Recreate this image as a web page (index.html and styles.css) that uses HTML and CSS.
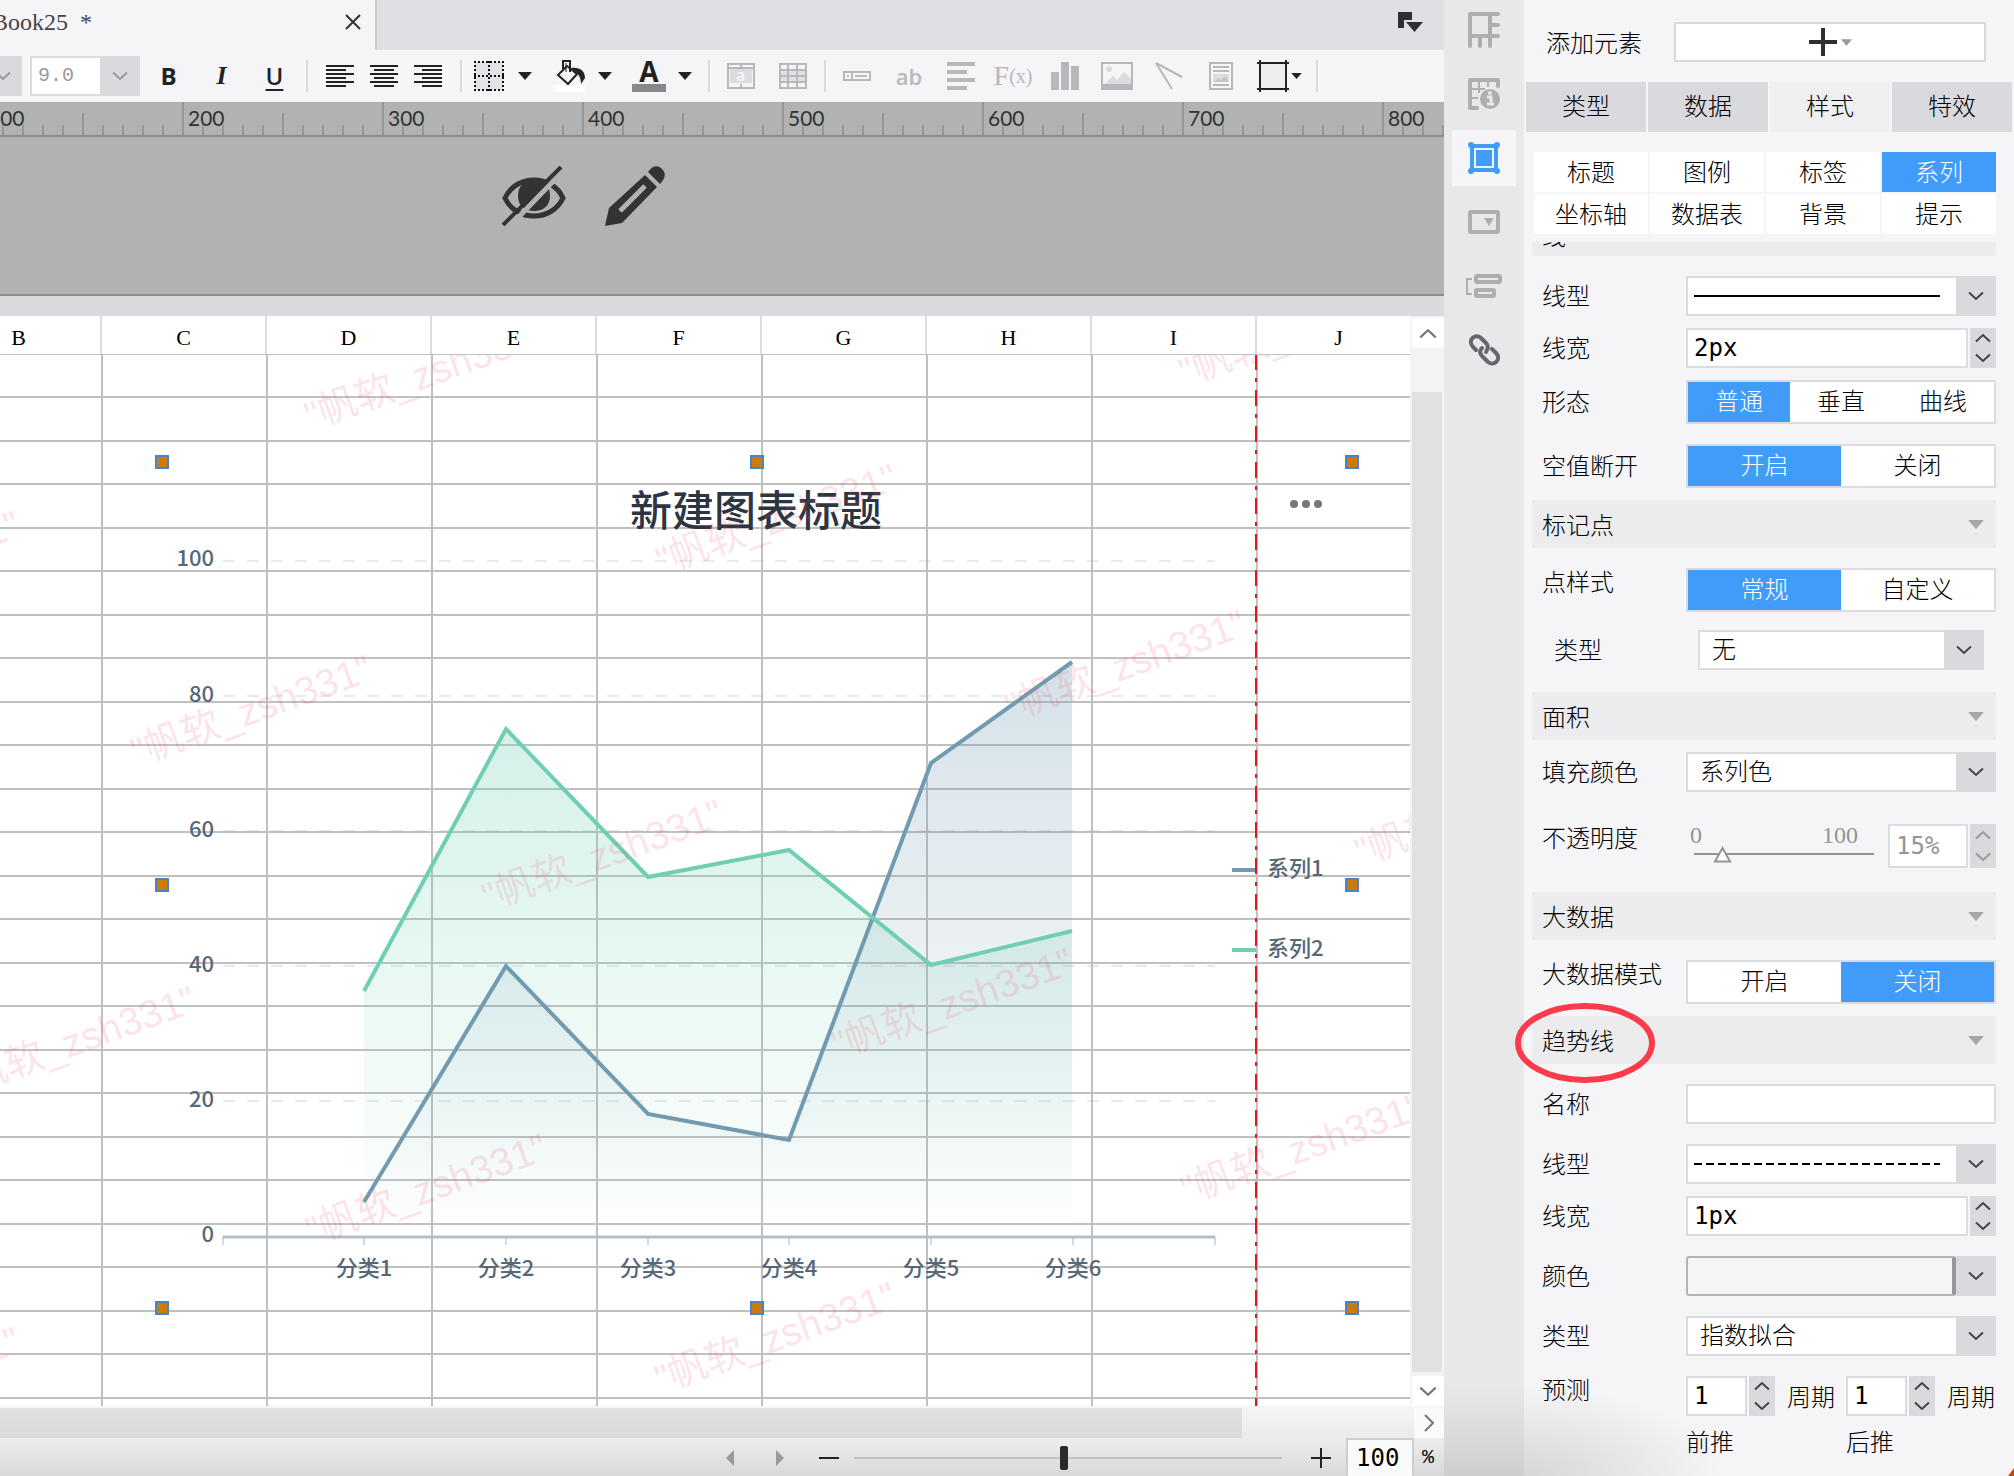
FILE: index.html
```html
<!DOCTYPE html>
<html lang="zh-CN">
<head>
    <meta charset="UTF-8">
    <meta name="viewport" content="width=device-width, initial-scale=1.0">
    <title>Book25</title>
    <link rel="stylesheet" href="styles.css">
</head>
<body>
    <svg class="defs" aria-hidden="true">
        <symbol id="down" viewBox="0 0 16 10"><path d="M1 1.500L8 8L15 1.500" fill="none" stroke="currentColor" stroke-width="2"/></symbol>
        <symbol id="up" viewBox="0 0 16 10"><path d="M1 8.500L8 2L15 8.500" fill="none" stroke="currentColor" stroke-width="2"/></symbol>
        <symbol id="caret" viewBox="0 0 14 8"><path d="M0 0H14L7 8Z" fill="currentColor"/></symbol>
    </svg>
    <div class="app">
        <main class="editor">
            <header class="tabs">
                <div class="file-tab">
                    <span>Book25&nbsp; *</span>
                    <button class="close" aria-label="关闭"><svg width="16" height="16" viewBox="0 0 16 16"><path d="M1 1L15 15M15 1L1 15" stroke="#333" stroke-width="2"/></svg></button>
                </div>
                <button class="tab-list" aria-label="列表"><svg width="26" height="20" viewBox="0 0 26 20"><path d="M1 0H15V8H7V16H1Z" fill="#2f2f33"/><path d="M9 10H26L17.500 20Z" fill="#2f2f33"/></svg></button>
            </header>

            <div class="toolbar">
                <div class="stub"><svg width="16" height="10"><use href="#down"/></svg></div>
                <div class="select size">
                    <select aria-label="字号" disabled><option>9.0</option></select>
                    <span class="arrow"><svg width="16" height="10"><use href="#down"/></svg></span>
                </div>
                <div class="group fonts">
                    <button class="bold">B</button>
                    <button class="italic">I</button>
                    <button class="under">U</button>
                </div>
                <i class="sep"></i>
                <div class="group aligns">
                    <button aria-label="左对齐"><svg width="28" height="24" viewBox="0 0 28 24"><path d="M0 2H28M0 6H20M0 10H28M0 14H20M0 18H28M0 22H20" stroke="#222" stroke-width="2"/></svg></button>
                    <button aria-label="居中"><svg width="28" height="24" viewBox="0 0 28 24"><path d="M0 2H28M4 6H24M0 10H28M4 14H24M0 18H28M4 22H24" stroke="#222" stroke-width="2"/></svg></button>
                    <button aria-label="右对齐"><svg width="28" height="24" viewBox="0 0 28 24"><path d="M0 2H28M8 6H28M0 10H28M8 14H28M0 18H28M8 22H28" stroke="#222" stroke-width="2"/></svg></button>
                </div>
                <i class="sep"></i>
                <div class="group drops">
                    <button aria-label="边框">
                        <svg width="34" height="32" viewBox="0 0 34 32"><rect x="3" y="2" width="28" height="28" fill="#e3e3e7"/><path d="M2 2H32M2 16H32M2 30H32M3 1V31M17 1V31M31 1V31" stroke="#111" stroke-width="2" stroke-dasharray="2 2"/></svg>
                        <svg width="14" height="8"><use href="#caret"/></svg>
                    </button>
                    <button aria-label="填充">
                        <svg width="34" height="32" viewBox="0 0 34 32"><path d="M1 25H33V32H1Z" fill="#fff"/><path d="M11 9V1H18V12M6 15L15 6L25 14L16 24Z" fill="#f5f5f8" stroke="#222" stroke-width="2"/><path d="M19 8C28 7 33 11 33 18L29 24C29 18 27 14 22 11Z" fill="#222"/><path d="M14 3V12" stroke="#222" stroke-width="1"/></svg>
                        <svg width="14" height="8"><use href="#caret"/></svg>
                    </button>
                    <button aria-label="字体颜色">
                        <span class="letter">A</span>
                        <svg width="14" height="8"><use href="#caret"/></svg>
                    </button>
                </div>
                <i class="sep"></i>
                <div class="group insert">
                    <button aria-label="合并"><svg width="28" height="26" viewBox="0 0 28 26"><path d="M1 1H27V25H1ZM1 5H27M14 1V5M14 21V25" fill="none" stroke="#b8b8bc" stroke-width="2"/><path d="M3 6H25V20H3Z" fill="#dcdce0"/><text x="14" y="18" class="ico-a">a</text></svg></button>
                    <button aria-label="拆分"><svg width="28" height="26" viewBox="0 0 28 26"><path d="M2 7H26V19H2Z" fill="#e0e0e4"/><path d="M1 1H27V25H1ZM1 7H27M1 13H27M1 19H27M9 1V25M18 1V25" fill="none" stroke="#b8b8bc" stroke-width="2"/></svg></button>
                </div>
                <i class="sep"></i>
                <div class="group insert">
                    <button aria-label="控件"><svg width="28" height="10" viewBox="0 0 28 10"><path d="M1 1H27V9H1ZM9 1V9M12 5H24M4 5H6" fill="none" stroke="#b8b8bc" stroke-width="2"/></svg></button>
                    <button class="ab">ab</button>
                    <button aria-label="段落"><svg width="28" height="28" viewBox="0 0 28 28"><path d="M0 2H28M0 10H20M0 18H28M0 26H20" stroke="#b8b8bc" stroke-width="4"/></svg></button>
                    <button class="fx">F<small>(x)</small></button>
                    <button aria-label="图表"><svg width="28" height="28" viewBox="0 0 28 28"><path d="M0 10H8V28H0ZM10 0H18V28H10ZM20 4H28V28H20Z" fill="#b8b8bc"/></svg></button>
                    <button aria-label="图片"><svg width="32" height="28" viewBox="0 0 32 28"><path d="M1 1H31V27H1Z" fill="none" stroke="#b8b8bc" stroke-width="2"/><path d="M1 22H31V27H1Z" fill="#b8b8bc"/><path d="M4 22L12 14L16 18L23 10L30 17V22Z" fill="#dcdce0"/><circle cx="8" cy="7" r="3" fill="#dcdce0"/></svg></button>
                    <button aria-label="斜线"><svg width="28" height="28" viewBox="0 0 28 28"><path d="M1 1L27 15M1 1L17 27" stroke="#b8b8bc" stroke-width="2"/></svg></button>
                    <button aria-label="文档"><svg width="24" height="28" viewBox="0 0 24 28"><path d="M1 1H23V27H1Z" fill="none" stroke="#b8b8bc" stroke-width="2"/><path d="M4 5H20M4 9H20M4 23H20" stroke="#b8b8bc" stroke-width="2"/><path d="M4 12H20V20H4Z" fill="#dcdce0"/><path d="M5 20L9 16L12 18L16 14L19 18V20Z" fill="#c4c4c8"/></svg></button>
                    <button class="frame" aria-label="悬浮">
                        <svg width="32" height="32" viewBox="0 0 32 32"><path d="M3 3H29V29H3Z" fill="#ededf0"/><path d="M0 3H32M0 29H32M3 0V32M29 0V32" stroke="#222" stroke-width="2"/></svg>
                        <svg width="11" height="6"><use href="#caret"/></svg>
                    </button>
                </div>
                <i class="sep"></i>
            </div>

            <div class="ruler">
                <span>100</span><span>200</span><span>300</span><span>400</span><span>500</span><span>600</span><span>700</span><span>800</span>
            </div>

            <div class="desk">
                <button aria-label="隐藏"><svg width="64" height="60" viewBox="0 0 64 60">
                    <path d="M3 32C14 8 50 8 61 32C50 56 14 56 3 32Z" fill="none" stroke="#333335" stroke-width="5"/>
                    <path d="M16 30C16 18 24 14 32 14C40 14 48 18 48 30C48 40 41 45 32 45C23 45 16 40 16 30Z" fill="#333335"/>
                    <path d="M62 4L8 60" stroke="#b2b2b2" stroke-width="5"/>
                    <path d="M59 1L1 59" stroke="#333335" stroke-width="4"/></svg></button>
                <button aria-label="编辑"><svg width="62" height="60" viewBox="0 0 62 60">
                    <path d="M41 9L53 21L18 57L1 60L5 42Z" fill="#333335"/>
                    <path d="M41 20L16 45" stroke="#b2b2b2" stroke-width="5"/>
                    <path d="M44 6C49 -1 54 -1 58 3C62 7 62 12 56 18Z" fill="#333335"/></svg></button>
            </div>

            <div class="sheet-wrap">
                <div class="sheet">
                    <div class="cols"><span>B</span><span>C</span><span>D</span><span>E</span><span>F</span><span>G</span><span>H</span><span>I</span><span>J</span></div>
                    <div class="cells">
                        <svg class="chart" width="1410" height="1052" viewBox="0 354 1410 1052">
                            <defs>
                                <linearGradient id="gGreen" x1="0" y1="0" x2="0" y2="1"><stop offset="0" stop-color="#6fcfb2" stop-opacity=".3"/><stop offset="1" stop-color="#6fcfb2" stop-opacity="0"/></linearGradient>
                                <linearGradient id="gBlue" x1="0" y1="0" x2="0" y2="1"><stop offset="0" stop-color="#729bb5" stop-opacity=".3"/><stop offset="1" stop-color="#729bb5" stop-opacity="0"/></linearGradient>
                            </defs>
                            <path class="grid" d="M223 561H1215M223 696H1215M223 831H1215M223 966H1215M223 1101H1215"/>
                            <path d="M364 991L506 729L648 877L789 850L931 965L1072 931V1230H364Z" fill="url(#gGreen)"/>
                            <path d="M364 1202L506 966L648 1114L789 1140L931 763L1072 662V1230H364Z" fill="url(#gBlue)"/>
                            <path class="line blue" d="M364 1202L506 966L648 1114L789 1140L931 763L1072 662"/>
                            <path class="line green" d="M364 991L506 729L648 877L789 850L931 965L1072 931"/>
                            <path class="axis" d="M223 1237H1215"/>
                            <path class="tick" d="M223 1237V1245M364 1237V1245M506 1237V1245M648 1237V1245M789 1237V1245M931 1237V1245M1073 1237V1245M1215 1237V1245"/>
                            <g class="label end">
                                <text x="214" y="566">100</text><text x="214" y="702">80</text><text x="214" y="837">60</text><text x="214" y="972">40</text><text x="214" y="1107">20</text><text x="214" y="1242">0</text>
                            </g>
                            <g class="label mid">
                                <text x="364" y="1276">分类1</text><text x="506" y="1276">分类2</text><text x="648" y="1276">分类3</text><text x="789" y="1276">分类4</text><text x="931" y="1276">分类5</text><text x="1073" y="1276">分类6</text>
                            </g>
                            <path class="line blue" d="M1232 870H1256"/><path class="line green" d="M1232 950H1256"/>
                            <g class="label"><text x="1267" y="876">系列1</text><text x="1267" y="956">系列2</text></g>
                            <text class="title" x="756" y="526">新建图表标题</text>
                            <g fill="#777"><circle cx="1294" cy="504" r="4"/><circle cx="1306" cy="504" r="4"/><circle cx="1318" cy="504" r="4"/></g>
                            <path class="page-edge" d="M1256 354V1406"/>
                            <g class="mark" transform="translate(6 6)">
                                <text transform="translate(305 424) rotate(-20)">"帆软_zsh331"</text>
                                <text transform="translate(656 569) rotate(-20)">"帆软_zsh331"</text>
                                <text transform="translate(1005 715) rotate(-20)">"帆软_zsh331"</text>
                                <text transform="translate(1355 860) rotate(-20)">"帆软_zsh331"</text>
                                <text transform="translate(131 760) rotate(-20)">"帆软_zsh331"</text>
                                <text transform="translate(482 905) rotate(-20)">"帆软_zsh331"</text>
                                <text transform="translate(832 1053) rotate(-20)">"帆软_zsh331"</text>
                                <text transform="translate(1181 1198) rotate(-20)">"帆软_zsh331"</text>
                                <text transform="translate(-45 1091) rotate(-20)">"帆软_zsh331"</text>
                                <text transform="translate(306 1239) rotate(-20)">"帆软_zsh331"</text>
                                <text transform="translate(655 1387) rotate(-20)">"帆软_zsh331"</text>
                                <text transform="translate(-221 1432) rotate(-20)">"帆软_zsh331"</text>
                                <text transform="translate(-221 616) rotate(-20)">"帆软_zsh331"</text>
                                <text transform="translate(1179 380) rotate(-20)">"帆软_zsh331"</text>
                            </g>
                            <g class="handles">
                                <rect x="156" y="456" width="12" height="12"/><rect x="751" y="456" width="12" height="12"/><rect x="1346" y="456" width="12" height="12"/>
                                <rect x="156" y="879" width="12" height="12"/><rect x="1346" y="879" width="12" height="12"/>
                                <rect x="156" y="1302" width="12" height="12"/><rect x="751" y="1302" width="12" height="12"/><rect x="1346" y="1302" width="12" height="12"/>
                            </g>
                        </svg>
                    </div>
                </div>
                <div class="vscroll">
                    <button aria-label="向上"><svg width="18" height="11"><use href="#up"/></svg></button>
                    <div class="thumb"></div>
                    <button aria-label="向下"><svg width="18" height="11"><use href="#down"/></svg></button>
                </div>
            </div>

            <div class="hscroll">
                <div class="thumb"></div>
                <button aria-label="向右"><svg width="10" height="18" viewBox="0 0 10 18"><path d="M1 1L9 9L1 17" fill="none" stroke="#777" stroke-width="2"/></svg></button>
            </div>
            <footer class="status">
                <button aria-label="上一页"><svg width="8" height="16" viewBox="0 0 8 16"><path d="M8 0V16L0 8Z" fill="#999"/></svg></button>
                <button aria-label="下一页"><svg width="8" height="16" viewBox="0 0 8 16"><path d="M0 0V16L8 8Z" fill="#999"/></svg></button>
                <button class="minus" aria-label="缩小"><svg width="22" height="22" viewBox="0 0 22 22"><path d="M1 11H21" stroke="#222" stroke-width="2"/></svg></button>
                <input class="zoom" type="range" min="0" max="100" value="49" aria-label="缩放">
                <button class="plus" aria-label="放大"><svg width="22" height="22" viewBox="0 0 22 22"><path d="M1 11H21M11 1V21" stroke="#222" stroke-width="2"/></svg></button>
                <input class="percent" id="percent" type="text" value="100">
                <label for="percent">%</label>
            </footer>
        </main>

        <nav class="rail">
            <button aria-label="单元格元素"><svg width="32" height="36" viewBox="0 0 32 36"><path d="M30 2H2V34M2 24H30M22 2V24M22 13H30M12 24V34M22 24V34" fill="none" stroke="#aeaeb0" stroke-width="4" stroke-linecap="round" stroke-linejoin="round"/></svg></button>
            <button aria-label="单元格属性"><svg width="32" height="32" viewBox="0 0 32 32"><path d="M30 8V2H2V30H9" fill="none" stroke="#aeaeb0" stroke-width="4" stroke-linecap="round" stroke-linejoin="round"/><path d="M11 3V15M20 3V9M4 11H17M4 20H10" stroke="#aeaeb0" stroke-width="2"/><circle cx="22" cy="21" r="10" fill="#aeaeb0"/><circle cx="22" cy="15" r="2" fill="#e8e8ea"/><path d="M19 19H23V26M19 26H26" fill="none" stroke="#e8e8ea" stroke-width="3"/></svg></button>
            <button class="on" aria-label="悬浮元素"><svg width="32" height="32" viewBox="0 0 32 32"><path d="M4 4H28V28H4Z" fill="none" stroke="#419bf9" stroke-width="4"/><path d="M8 8H24V24H8Z" fill="#419bf9"/><g fill="#419bf9"><circle cx="3" cy="3" r="3"/><circle cx="29" cy="3" r="3"/><circle cx="3" cy="29" r="3"/><circle cx="29" cy="29" r="3"/></g></svg></button>
            <button aria-label="控件设置"><svg width="32" height="24" viewBox="0 0 32 24"><rect x="2" y="2" width="28" height="20" rx="1" fill="none" stroke="#aeaeb0" stroke-width="4"/><path d="M16 8H26L21 16Z" fill="#aeaeb0"/></svg></button>
            <button aria-label="条件属性"><svg width="36" height="24" viewBox="0 0 36 24"><path d="M6 5H1V20H6" fill="none" stroke="#aeaeb0" stroke-width="2"/><rect x="10" y="2" width="24" height="6" rx="1" fill="none" stroke="#aeaeb0" stroke-width="4"/><rect x="10" y="16" width="18" height="6" rx="1" fill="none" stroke="#aeaeb0" stroke-width="4"/></svg></button>
            <button aria-label="超级链接"><svg width="32" height="32" viewBox="0 0 32 32"><g fill="none" stroke="#66676c" stroke-width="4" stroke-linecap="round"><path d="M8 16L5 13C-1 6 7 -1 13 4L18 9C21 12 20 15 18 18"/><path d="M14 14C11 17 12 20 14 22L20 28C26 33 34 25 28 19L24 15"/></g></svg></button>
        </nav>

        <aside class="panel">
            <div class="add-row">
                <span>添加元素</span>
                <button aria-label="添加"><svg width="28" height="28" viewBox="0 0 28 28"><path d="M0 14H28M14 0V28" stroke="#2f2f33" stroke-width="4"/></svg><svg class="mini" width="11" height="7"><use href="#caret"/></svg></button>
            </div>
            <div class="main-tabs">
                <button>类型</button><button>数据</button><button class="on">样式</button><button>特效</button>
            </div>
            <div class="sub-tabs">
                <button>标题</button><button>图例</button><button>标签</button><button class="on">系列</button>
                <button>坐标轴</button><button>数据表</button><button>背景</button><button>提示</button>
            </div>
            <div class="scroll">
                <h3 class="cut"><span>线</span></h3>
                <div class="row first">
                    <label for="lineType">线型</label>
                    <div class="select"><select id="lineType"><option></option></select><i class="stroke"></i><span class="arrow"><svg width="16" height="10"><use href="#down"/></svg></span></div>
                </div>
                <div class="row">
                    <label for="lineWidth">线宽</label>
                    <div class="spin"><input id="lineWidth" type="text" value="2px"><div class="steps"><button aria-label="增加"><svg width="16" height="10"><use href="#up"/></svg></button><button aria-label="减少"><svg width="16" height="10"><use href="#down"/></svg></button></div></div>
                </div>
                <div class="row">
                    <span class="name">形态</span>
                    <div class="seg"><button class="on">普通</button><button>垂直</button><button>曲线</button></div>
                </div>
                <div class="row wide">
                    <span class="name">空值断开</span>
                    <div class="seg"><button class="on">开启</button><button>关闭</button></div>
                </div>

                <h3><span>标记点</span><svg width="16" height="9"><use href="#caret"/></svg></h3>
                <div class="row top wide">
                    <span class="name">点样式</span>
                    <div class="seg"><button class="on">常规</button><button>自定义</button></div>
                </div>
                <div class="row inset">
                    <label for="pointType">类型</label>
                    <div class="select"><select id="pointType"><option>无</option></select><span class="arrow"><svg width="16" height="10"><use href="#down"/></svg></span></div>
                </div>

                <h3 class="far"><span>面积</span><svg width="16" height="9"><use href="#caret"/></svg></h3>
                <div class="row">
                    <label for="fill">填充颜色</label>
                    <div class="select"><select id="fill"><option>系列色</option></select><span class="arrow"><svg width="16" height="10"><use href="#down"/></svg></span></div>
                </div>
                <div class="row top alpha">
                    <label for="alpha">不透明度</label>
                    <div class="slider">
                        <div class="scale"><span>0</span><span>100</span></div>
                        <input id="alpha" type="range" min="0" max="100" value="15" disabled>
                    </div>
                    <div class="spin off"><input type="text" value="15%" aria-label="不透明度" disabled><div class="steps"><button aria-label="增加" disabled><svg width="16" height="10"><use href="#up"/></svg></button><button aria-label="减少" disabled><svg width="16" height="10"><use href="#down"/></svg></button></div></div>
                </div>

                <h3 class="far"><span>大数据</span><svg width="16" height="9"><use href="#caret"/></svg></h3>
                <div class="row top wide">
                    <span class="name">大数据模式</span>
                    <div class="seg"><button>开启</button><button class="on">关闭</button></div>
                </div>

                <h3 class="trend"><span>趋势线</span><svg width="16" height="9"><use href="#caret"/></svg>
                    <svg class="ring" width="142" height="82" viewBox="0 0 142 82"><ellipse cx="71" cy="41" rx="67" ry="37" fill="none" stroke="#fa3b4b" stroke-width="6"/></svg>
                </h3>
                <div class="row wide">
                    <label for="trendName">名称</label>
                    <input id="trendName" class="text" type="text">
                </div>
                <div class="row wide">
                    <label for="trendLine">线型</label>
                    <div class="select"><select id="trendLine"><option></option></select><i class="stroke dashed"></i><span class="arrow"><svg width="16" height="10"><use href="#down"/></svg></span></div>
                </div>
                <div class="row">
                    <label for="trendWidth">线宽</label>
                    <div class="spin"><input id="trendWidth" type="text" value="1px"><div class="steps"><button aria-label="增加"><svg width="16" height="10"><use href="#up"/></svg></button><button aria-label="减少"><svg width="16" height="10"><use href="#down"/></svg></button></div></div>
                </div>
                <div class="row wide">
                    <label for="color">颜色</label>
                    <button id="color" class="select color"><i class="swatch"></i><span class="arrow"><svg width="16" height="10"><use href="#down"/></svg></span></button>
                </div>
                <div class="row wide">
                    <label for="trendType">类型</label>
                    <div class="select"><select id="trendType"><option>指数拟合</option></select><span class="arrow"><svg width="16" height="10"><use href="#down"/></svg></span></div>
                </div>
                <div class="row top wide">
                    <span class="name">预测</span>
                    <div class="forecast">
                        <div>
                            <div class="period"><div class="spin"><input id="forward" type="text" value="1"><div class="steps"><button aria-label="增加"><svg width="16" height="10"><use href="#up"/></svg></button><button aria-label="减少"><svg width="16" height="10"><use href="#down"/></svg></button></div></div><span>周期</span></div>
                            <label for="forward">前推</label>
                        </div>
                        <div>
                            <div class="period"><div class="spin"><input id="back" type="text" value="1"><div class="steps"><button aria-label="增加"><svg width="16" height="10"><use href="#up"/></svg></button><button aria-label="减少"><svg width="16" height="10"><use href="#down"/></svg></button></div></div><span>周期</span></div>
                            <label for="back">后推</label>
                        </div>
                    </div>
                </div>
            </div>
            <i class="corner"></i>
        </aside>
    </div>
</body>
</html>
```
FILE: styles.css
```css
* { box-sizing: border-box; }
body { margin: 0; overflow: hidden; background: #f5f5f8; color: #000; font-family: "Noto Sans CJK SC", sans-serif; font-size: 24px; font-weight: 300; line-height: 26px; }
button { display: flex; align-items: center; justify-content: center; padding: 0; border: 0; background: none; color: inherit; font: inherit; cursor: pointer; }
input, select { font: inherit; color: inherit; border-radius: 0; outline: none; }
svg { display: block; flex: none; }
.defs { position: absolute; width: 0; height: 0; }

.app { display: flex; height: 100vh; overflow: hidden; }
.editor { flex: 1; min-width: 0; display: flex; flex-direction: column; overflow: hidden; }

/* file tabs */
.tabs { display: flex; justify-content: space-between; height: 50px; flex: none; background: #e0dfe4; }
.file-tab { display: flex; justify-content: space-between; width: 377px; padding: 6px 14px 0 0; background: #f5f5f8; border-right: 2px solid #cbcbd0; color: #444; font-family: "Liberation Serif", serif; font-size: 24px; line-height: 32px; white-space: nowrap; }
.file-tab span { margin-left: -8px; }
.file-tab .close { height: 32px; }
.tab-list { padding-right: 21px; height: 44px; }

/* toolbar */
.toolbar { display: flex; align-items: center; height: 52px; flex: none; background: #f5f5f8; color: #222; }
.stub { display: flex; align-items: center; justify-content: flex-end; width: 22px; height: 40px; padding-right: 11px; margin-right: 8px; background: #dadade; color: #999; }
.select { position: relative; display: flex; flex: 1; height: 40px; min-width: 0; background: #fff; border: 2px solid #dcdce0; border-right: 0; }
.select select { flex: 1; min-width: 0; appearance: none; border: 0; background: none; padding: 0 0 4px 12px; opacity: 1; }
.select .arrow { display: flex; align-items: center; justify-content: center; width: 40px; margin: -2px 0; background: #dadade; color: #444; pointer-events: none; }
.size { flex: none; width: 110px; margin-right: 2px; }
.size select { padding: 0 0 0 6px; color: #999; font-family: "Liberation Mono", monospace; font-size: 20px; }
.size .arrow { color: #999; }
.group { display: flex; align-items: center; height: 40px; }
.fonts button { width: 53px; font-family: "Open Sans", sans-serif; font-size: 24px; font-weight: 700; }
.fonts .italic { font-family: "Liberation Serif", serif; font-style: italic; font-size: 26px; }
.fonts .under { font-weight: 600; text-decoration: underline; text-decoration-thickness: 2px; text-underline-offset: 4px; }
.sep { width: 2px; height: 32px; margin: 0 5px; background: #dcdce0; }
.aligns { padding: 0 5px; }
.aligns button { width: 44px; }
.drops { gap: 20px; padding: 0 11px 0 5px; }
.drops button { gap: 12px; }
.letter { width: 34px; height: 32px; border-bottom: 8px solid #888; font-family: "Open Sans", sans-serif; font-size: 28px; font-weight: 700; line-height: 22px; }
.insert button { width: 52px; }
.insert .frame { width: 64px; gap: 2px; }
.ico-a { fill: #f5f5f8; font-family: "Open Sans", sans-serif; font-size: 16px; font-weight: 600; text-anchor: middle; }
.ab, .fx { color: #b8b8bc; }
.insert .ab { font-family: "Open Sans", sans-serif; font-size: 22px; font-weight: 600; }
.insert .fx { font-family: "Liberation Serif", serif; font-size: 28px; font-weight: 400; }
.fx small { font-size: 20px; }

/* ruler: 200px major, 100px half, 20px minor */
.ruler { display: flex; height: 35px; flex: none; overflow: hidden; border-bottom: 2px solid #8c8c8c; background-color: #b2b2b2; color: #333; font-family: Lato, sans-serif; font-size: 21px; font-weight: 400; line-height: 32px;
    background-image: linear-gradient(90deg, #969698 2px, transparent 2px), linear-gradient(90deg, #969698 2px, transparent 2px), linear-gradient(90deg, #969698 2px, transparent 2px);
    background-size: 200px 34px, 200px 22px, 20px 10px; background-position: 182px 0, 82px 11px, 2px 23px; background-repeat: repeat-x; }
.ruler span { flex: none; width: 200px; padding-left: 6px; }
.ruler span:first-child { margin-left: -18px; }

.desk { display: flex; gap: 38px; height: 159px; flex: none; padding: 29px 0 0 502px; align-items: flex-start; background: #b2b2b2; border-bottom: 2px solid #8c8c8c; }

/* sheet */
.sheet-wrap { display: flex; flex: 1; min-height: 0; border-top: 20px solid #dad9de; }
.sheet { flex: 1; min-width: 0; overflow: hidden; background: #fff; display: flex; flex-direction: column; }
.cols { display: flex; height: 38px; flex: none; margin-left: -63px; font-family: "Liberation Serif", serif; font-size: 22px; line-height: 44px; }
.cols span { flex: none; width: 165px; text-align: center; border-right: 2px solid #dcdce0; }
.cells { position: relative; flex: 1; min-height: 0; overflow: hidden; border-top: 1px solid #c0c0c0;
    background-image: linear-gradient(90deg, #c0c0c0 2px, transparent 2px), linear-gradient(#c0c0c0 2px, transparent 2px), linear-gradient(#c0c0c0 2px, transparent 2px);
    background-size: 165px 100%, 100% 87px, 100% 87px; background-position: 101px 0, 0 41px, 0 85px; }
.chart { position: absolute; left: 0; top: -1px; }
.grid { fill: none; stroke: #8fa3c0; stroke-opacity: .22; stroke-width: 2; stroke-dasharray: 12 12; }
.line { fill: none; stroke-width: 4; }
.blue { stroke: #729bb1; }
.green { stroke: #70cfb3; }
.axis { fill: none; stroke: #b3bfc8; stroke-width: 3; }
.tick { fill: none; stroke: #a8b3bc; stroke-width: 1; }
.label { fill: #566778; font-size: 22px; font-weight: 500; }
.end { text-anchor: end; }
.mid, .title { text-anchor: middle; }
.title { fill: #2c3642; font-size: 42px; font-weight: 500; }
.page-edge { stroke: #dc1a1e; stroke-width: 2; stroke-dasharray: 16 8 4 8; }
.mark { fill: #f0506e; fill-opacity: .17; font-family: "Liberation Sans", "Noto Sans CJK SC", sans-serif; font-size: 39px; font-weight: 400; }
.handles rect { fill: #cc7a0a; stroke: #4a84c8; stroke-width: 2; }

.vscroll { display: flex; flex-direction: column; width: 34px; padding: 2px 0 0 2px; background: #f3f3f5; color: #777; }
.vscroll button { height: 30px; background: #fff; }
.vscroll .thumb { flex: 1; width: 30px; margin: 44px 0 4px; background: #e1e1e1; }
.hscroll { display: flex; justify-content: space-between; height: 32px; flex: none; padding-top: 2px; background: linear-gradient(#f5f5f7, #ebebee); }
.hscroll .thumb { width: 86%; background: linear-gradient(#e1e1e1, #dadada); }
.hscroll button { width: 30px; background: #fafafa; }
.status { display: flex; align-items: center; justify-content: flex-end; height: 38px; flex: none; padding: 2px 6px 0 0; background: linear-gradient(#ededef, #d8d8da); }
.status button { margin-right: 42px; }
.status .minus { margin: 0 14px 0 -8px; }
.status .plus { margin: 0 14px 0 28px; }
.zoom { appearance: none; width: 428px; height: 26px; margin: 0; background: linear-gradient(#c4c4c8, #c4c4c8) no-repeat center / 100% 2px; }
.zoom::-webkit-slider-thumb { appearance: none; width: 8px; height: 24px; border-radius: 2px; background: #2a2a2c; }
.percent { width: 68px; height: 40px; padding: 0 8px; border: 2px solid #cfcfd3; background: #fafafa; font-family: "DejaVu Sans Mono", monospace; font-size: 24px; }
.status label { width: 24px; padding-left: 8px; font-family: "Liberation Mono", monospace; font-size: 20px; }

/* icon rail */
.rail { display: flex; flex-direction: column; align-items: center; gap: 8px; width: 80px; flex: none; padding-top: 2px; background: linear-gradient(#e8e8ea 94%, #cecece); }
.rail button { width: 64px; height: 56px; }
.rail .on { background: #f5f5f8; }

/* properties panel */
.panel { position: relative; width: 490px; flex: none; background: radial-gradient(ellipse 200px 90px at 0 100%, #d6d6d7, #f5f5f8); }
.add-row { display: flex; align-items: center; padding: 22px 28px 20px 22px; }
.add-row span { width: 128px; }
.add-row button { flex: 1; gap: 4px; height: 40px; background: #fff; border: 2px solid #dadade; }
.mini { color: #999; }
.main-tabs { display: grid; grid-template-columns: repeat(4, 1fr); gap: 2px; padding: 0 2px; }
.main-tabs button { height: 50px; padding-bottom: 4px; background: #dadade; }
.main-tabs .on { background: #efeff2; }
.sub-tabs { display: grid; grid-template-columns: repeat(4, 1fr); gap: 2px; padding: 20px 18px 8px 10px; }
.sub-tabs button { height: 40px; padding-bottom: 2px; background: #fff; }
.sub-tabs .on, .seg .on { background: #419bf9; color: #fff; }
.scroll { padding: 0 18px 0 8px; }
h3 { position: relative; display: flex; align-items: center; justify-content: space-between; height: 48px; margin: 12px 0 20px; padding: 0 12px 0 10px; background: #ececee; font-size: 24px; font-weight: 300; }
h3 > svg { color: #a6a6a8; }
h3.cut { height: 14px; margin: 0 0 20px; overflow: hidden; align-items: flex-end; }
h3.cut span { margin-bottom: 8px; }
h3.far { margin: 22px 0 12px; }
.row { display: flex; align-items: center; margin-top: 12px; padding-left: 10px; }
.row > label, .row > .name { width: 144px; flex: none; padding-bottom: 2px; white-space: nowrap; }
.row.wide { margin-top: 20px; }
.row.top { align-items: flex-start; }
.row.inset { margin-top: 18px; padding: 0 12px 0 22px; }
.stroke { position: absolute; left: 6px; right: 56px; top: 17px; height: 2px; background: #000; pointer-events: none; }
.dashed { background: repeating-linear-gradient(90deg, #000 0 8px, transparent 8px 12px); }
.spin { display: flex; flex: 1; min-width: 0; height: 40px; gap: 2px; }
.spin input, .text { flex: 1; width: 0; min-width: 0; height: 40px; border: 2px solid #dcdce0; background: #fff; padding: 0 6px; font-family: "DejaVu Sans Mono", monospace; font-size: 24px; }
.steps { display: flex; flex-direction: column; width: 26px; background: #dadade; color: #444; }
.steps button { flex: 1; }
.seg { display: flex; flex: 1; height: 44px; border: 2px solid #dcdce0; background: #fff; }
.seg button { flex: 1; padding-bottom: 4px; }
.alpha { margin-top: 32px; padding-bottom: 2px; }
.slider { width: 196px; color: #949494; font-family: "Liberation Serif", serif; }
.scale { display: flex; justify-content: space-between; padding: 0 24px 0 4px; line-height: 22px; }
#alpha { display: block; appearance: none; width: 196px; height: 16px; margin: 0; background: linear-gradient(#949494, #949494) no-repeat center / 180px 2px; }
#alpha::-webkit-slider-thumb { appearance: none; width: 19px; height: 17px; background: url("data:image/svg+xml,%3Csvg xmlns='http://www.w3.org/2000/svg' width='19' height='17'%3E%3Cpath d='M9.500 2L17 15.500H2Z' fill='%23fff' stroke='%23949494' stroke-width='2'/%3E%3C/svg%3E"); }
.spin.off { height: 44px; margin-left: 6px; }
.spin.off input { height: 44px; color: #949494; }
.off .steps { color: #999; }
h3.far + .row { margin-top: 12px; }
h3.far + .row.wide { margin-top: 20px; }
.ring { position: absolute; left: -18px; top: -14px; }
.color { background: #f5f5f8; border: 0; align-items: stretch; }
.swatch { flex: 1; border: 2px solid #b4b4b6; border-right: 4px solid #989898; border-radius: 3px; }
.color .arrow { margin: 0; }
.forecast { display: flex; flex: 1; }
.forecast > div:first-child { width: 160px; }
.period { display: flex; align-items: center; margin-bottom: 12px; }
.period .spin { flex: none; width: 89px; }
.period span { margin-left: 12px; white-space: nowrap; }
.corner { position: absolute; right: 0; bottom: 0; width: 6px; height: 8px; background: #b8501c; clip-path: polygon(100% 0, 100% 100%, 0 100%); }
```
